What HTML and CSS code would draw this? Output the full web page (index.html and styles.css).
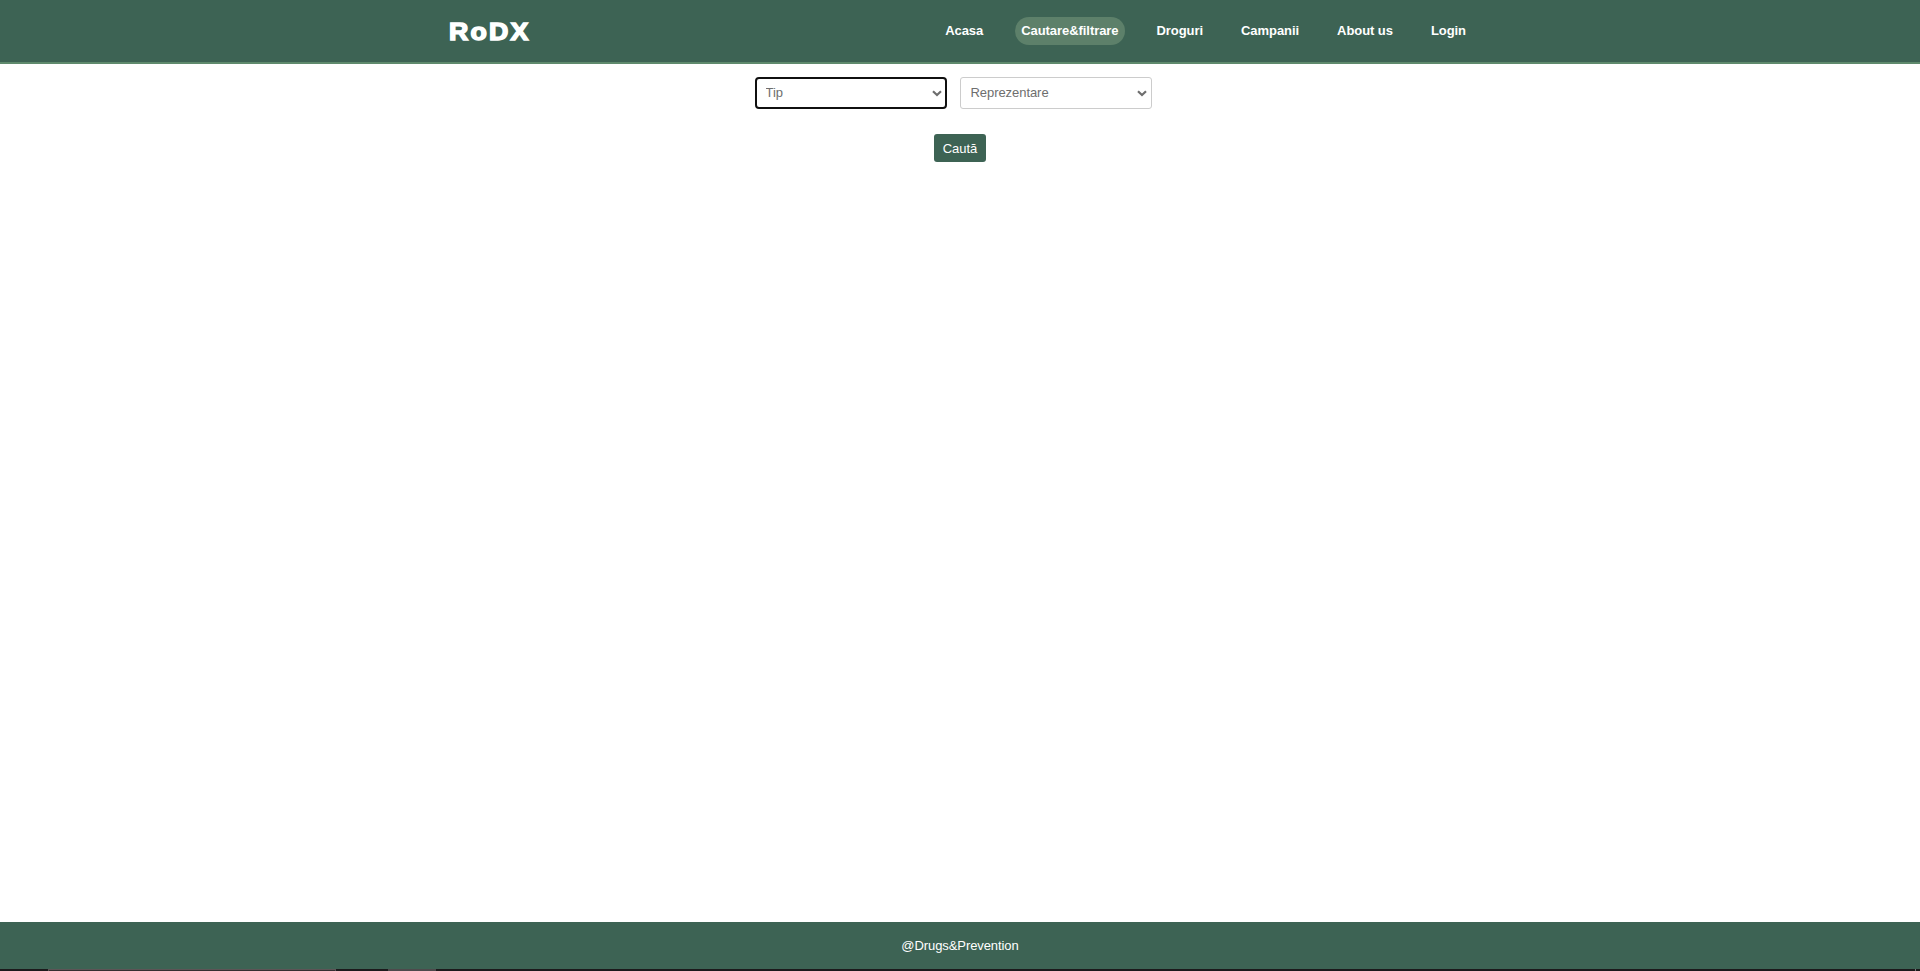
FILE: index.html
```html
<!DOCTYPE html>
<html lang="ro">
<head>
<meta charset="utf-8">
<title>RoDX</title>
<link rel="stylesheet" href="styles.css">
</head>
<body>
<header class="header">
  <div class="header-inner">
    <a class="logo">RoDX</a>
    <nav class="nav">
      <a class="nav-link">Acasa</a>
      <a class="nav-link active">Cautare&amp;filtrare</a>
      <a class="nav-link">Droguri</a>
      <a class="nav-link">Campanii</a>
      <a class="nav-link">About us</a>
      <a class="nav-link">Login</a>
    </nav>
  </div>
</header>
<main class="main">
  <div class="filters">
    <div class="field">
      <select class="select focused"><option>Tip</option></select>
      <svg class="chevron" viewBox="0 0 10 7"><path d="M1 1.2 L5 5 L9 1.2"/></svg>
    </div>
    <div class="field">
      <select class="select"><option>Reprezentare</option></select>
      <svg class="chevron" viewBox="0 0 10 7"><path d="M1 1.2 L5 5 L9 1.2"/></svg>
    </div>
  </div>
  <button class="search">Caută</button>
</main>
<footer class="footer">@Drugs&amp;Prevention</footer>
<div class="taskbar"><span class="task-search"></span><span class="task-item"></span><span class="task-end"></span></div>
</body>
</html>
```
FILE: styles.css
```css
* { box-sizing: border-box; }
body {
  margin: 0;
  height: 971px;
  display: flex;
  flex-direction: column;
  overflow: hidden;
  background: #fff;
  font: 13px "Liberation Sans", Arial, sans-serif;
}
.header {
  height: 64px;
  flex: none;
  background: #3d6354;
  border-bottom: 2px solid #5f8a6d;
}
.header-inner {
  width: 1024px;
  height: 62px;
  margin: 0 auto;
  display: flex;
  justify-content: space-between;
}
.logo {
  padding: 16px 0 0 1px;
  color: #fff;
  font: 900 24.5px/32px "Liberation Sans", sans-serif;
  letter-spacing: 2px;
  -webkit-text-stroke: 1.5px #fff;
  transform: scaleX(1.09);
  transform-origin: left;
}
.nav {
  display: flex;
  align-items: flex-start;
  gap: 26px;
  padding-top: 17px;
}
.nav-link {
  height: 28px;
  padding: 0 6px;
  border-radius: 14px;
  color: #fff;
  font-weight: bold;
  line-height: 27px;
  letter-spacing: -0.06px;
}
.nav-link.active { background: #5d806a; }
.main {
  flex: 1;
  display: flex;
  flex-direction: column;
  align-items: center;
  padding-top: 13px;
}
.filters {
  display: flex;
  gap: 13px;
  margin-right: 13px;
}
.field {
  position: relative;
  width: 192px;
  height: 32px;
}
.select {
  appearance: none;
  display: block;
  width: 100%;
  height: 32px;
  padding: 0 9px 1px 9.5px;
  border: 1px solid #ccc;
  border-radius: 3px;
  background: #fff;
  color: #6e6e6e;
  font: inherit;
  letter-spacing: -0.06px;
}
.select.focused {
  padding-left: 8.5px;
  border: 2px solid #101010;
  border-radius: 4px;
}
.chevron {
  position: absolute;
  right: 5px;
  top: 13px;
  width: 10px;
  height: 7px;
  fill: none;
  stroke: #6e6e6e;
  stroke-width: 2.2;
}
.search {
  width: 52px;
  height: 28px;
  margin-top: 25px;
  padding: 0;
  border: 0;
  border-radius: 3px;
  background: #3d6354;
  color: #fff;
  font: inherit;
}
.footer {
  height: 47px;
  flex: none;
  background: #3d6354;
  color: #fff;
  text-align: center;
  line-height: 47px;
  letter-spacing: -0.08px;
}
.taskbar {
  height: 2px;
  flex: none;
  display: flex;
  padding-left: 48px;
  background: #1c1a1c;
}
.task-search {
  width: 288px;
  border: solid #5c5456;
  border-width: 1px 1px 0;
  background: #352f31;
}
.task-item {
  width: 48px;
  margin-left: 52px;
  background: #4d4a4c;
}
.task-end {
  width: 1px;
  margin: 0 4px 0 auto;
  background: #777;
}
```
